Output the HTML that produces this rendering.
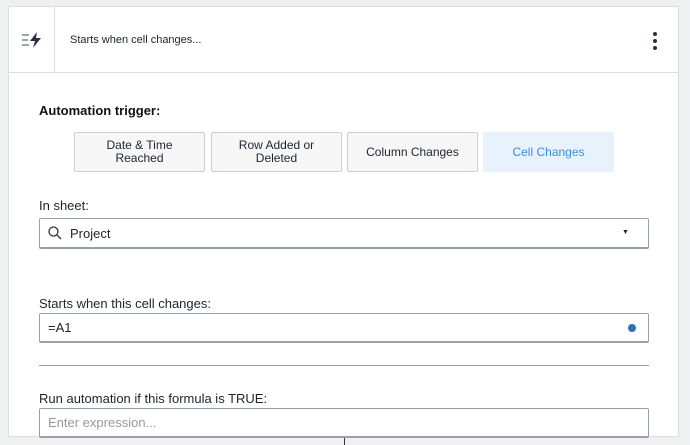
<!DOCTYPE html>
<html><head><style>
body{margin:0;width:690px;height:445px;background:#eef0f2;font-family:"Liberation Sans",sans-serif;position:relative;overflow:hidden;color:#1d2430}
.card{position:absolute;left:8px;top:6px;width:671px;height:431px;background:#fff;border:1px solid #dcdee2;box-sizing:border-box}
.hdr{position:absolute;left:0;top:0;right:0;height:65px;border-bottom:1px solid #dcdee2}
.vl{position:absolute;left:45px;top:0;height:65px;border-left:1px solid #dcdee2}
.abs{position:absolute}
.btn{position:absolute;top:132px;width:131px;height:40px;box-sizing:border-box;border:1px solid #c9ccd2;border-radius:2px;background:#f7f7f8;font-size:12px;text-align:center;display:flex;align-items:center;justify-content:center;line-height:13px}
.inp{position:absolute;left:39px;width:610px;box-sizing:border-box;border:1px solid #9aa0a8;border-bottom-width:2px;border-radius:2px;background:#fff;font-size:13px}
.lbl{position:absolute;left:39px;font-size:13px}
</style></head><body>
<div class="card">
<div class="hdr"><div class="vl"></div>
<svg class="abs" style="left:12px;top:24px" width="24" height="18" viewBox="0 0 24 18">
<rect x="1" y="3" width="7" height="2" fill="#a0a4ab"/><rect x="1" y="8" width="6" height="2" fill="#a0a4ab"/><rect x="1" y="13" width="7" height="2" fill="#a0a4ab"/>
<path d="M16 1 L9 10 H14 L12 17 L20 7 H15 Z" fill="#2a3040"/></svg>
<div class="abs" style="left:61px;top:27px;font-size:11px">Starts when cell changes...</div>
<svg class="abs" style="left:643px;top:24px" width="6" height="20"><circle cx="3" cy="3" r="2" fill="#2a3040"/><circle cx="3" cy="10" r="2" fill="#2a3040"/><circle cx="3" cy="17" r="2" fill="#2a3040"/></svg>
</div>
</div>
<div class="abs" style="left:39px;top:103px;font-size:13px;font-weight:bold;color:#111">Automation trigger:</div>
<div class="btn" style="left:74px">Date &amp; Time<br>Reached</div>
<div class="btn" style="left:211px">Row Added or<br>Deleted</div>
<div class="btn" style="left:347px">Column Changes</div>
<div class="btn" style="left:483px;background:#e8f2fc;border-color:#e8f2fc;color:#3a8ee0">Cell Changes</div>
<div class="lbl" style="top:198px">In sheet:</div>
<div class="inp" style="top:218px;height:31px">
<svg class="abs" style="left:8px;top:7px" width="14" height="14"><circle cx="5.5" cy="5.5" r="4.5" fill="none" stroke="#333" stroke-width="1.3"/><path d="M9 9 L13 13" stroke="#333" stroke-width="1.3"/></svg>
<span class="abs" style="left:30px;top:7px">Project</span>
<span class="abs" style="left:582px;top:10px;font-size:7px">▼</span></div>
<div class="lbl" style="top:296px">Starts when this cell changes:</div>
<div class="inp" style="top:313px;height:30px"><span class="abs" style="left:8px;top:6px">=A1</span>
<span class="abs" style="left:588px;top:10px;width:8px;height:8px;border-radius:50%;background:#2a6fb8"></span></div>
<div class="abs" style="left:39px;top:365px;width:610px;border-top:1px solid #9aa0a8"></div>
<div class="lbl" style="top:391px">Run automation if this formula is TRUE:</div>
<div class="inp" style="top:408px;height:30px"><span class="abs" style="left:8px;top:6px;color:#999">Enter expression...</span></div>
<div class="abs" style="left:344px;top:438px;width:1px;height:7px;background:#334"></div>
</body></html>
